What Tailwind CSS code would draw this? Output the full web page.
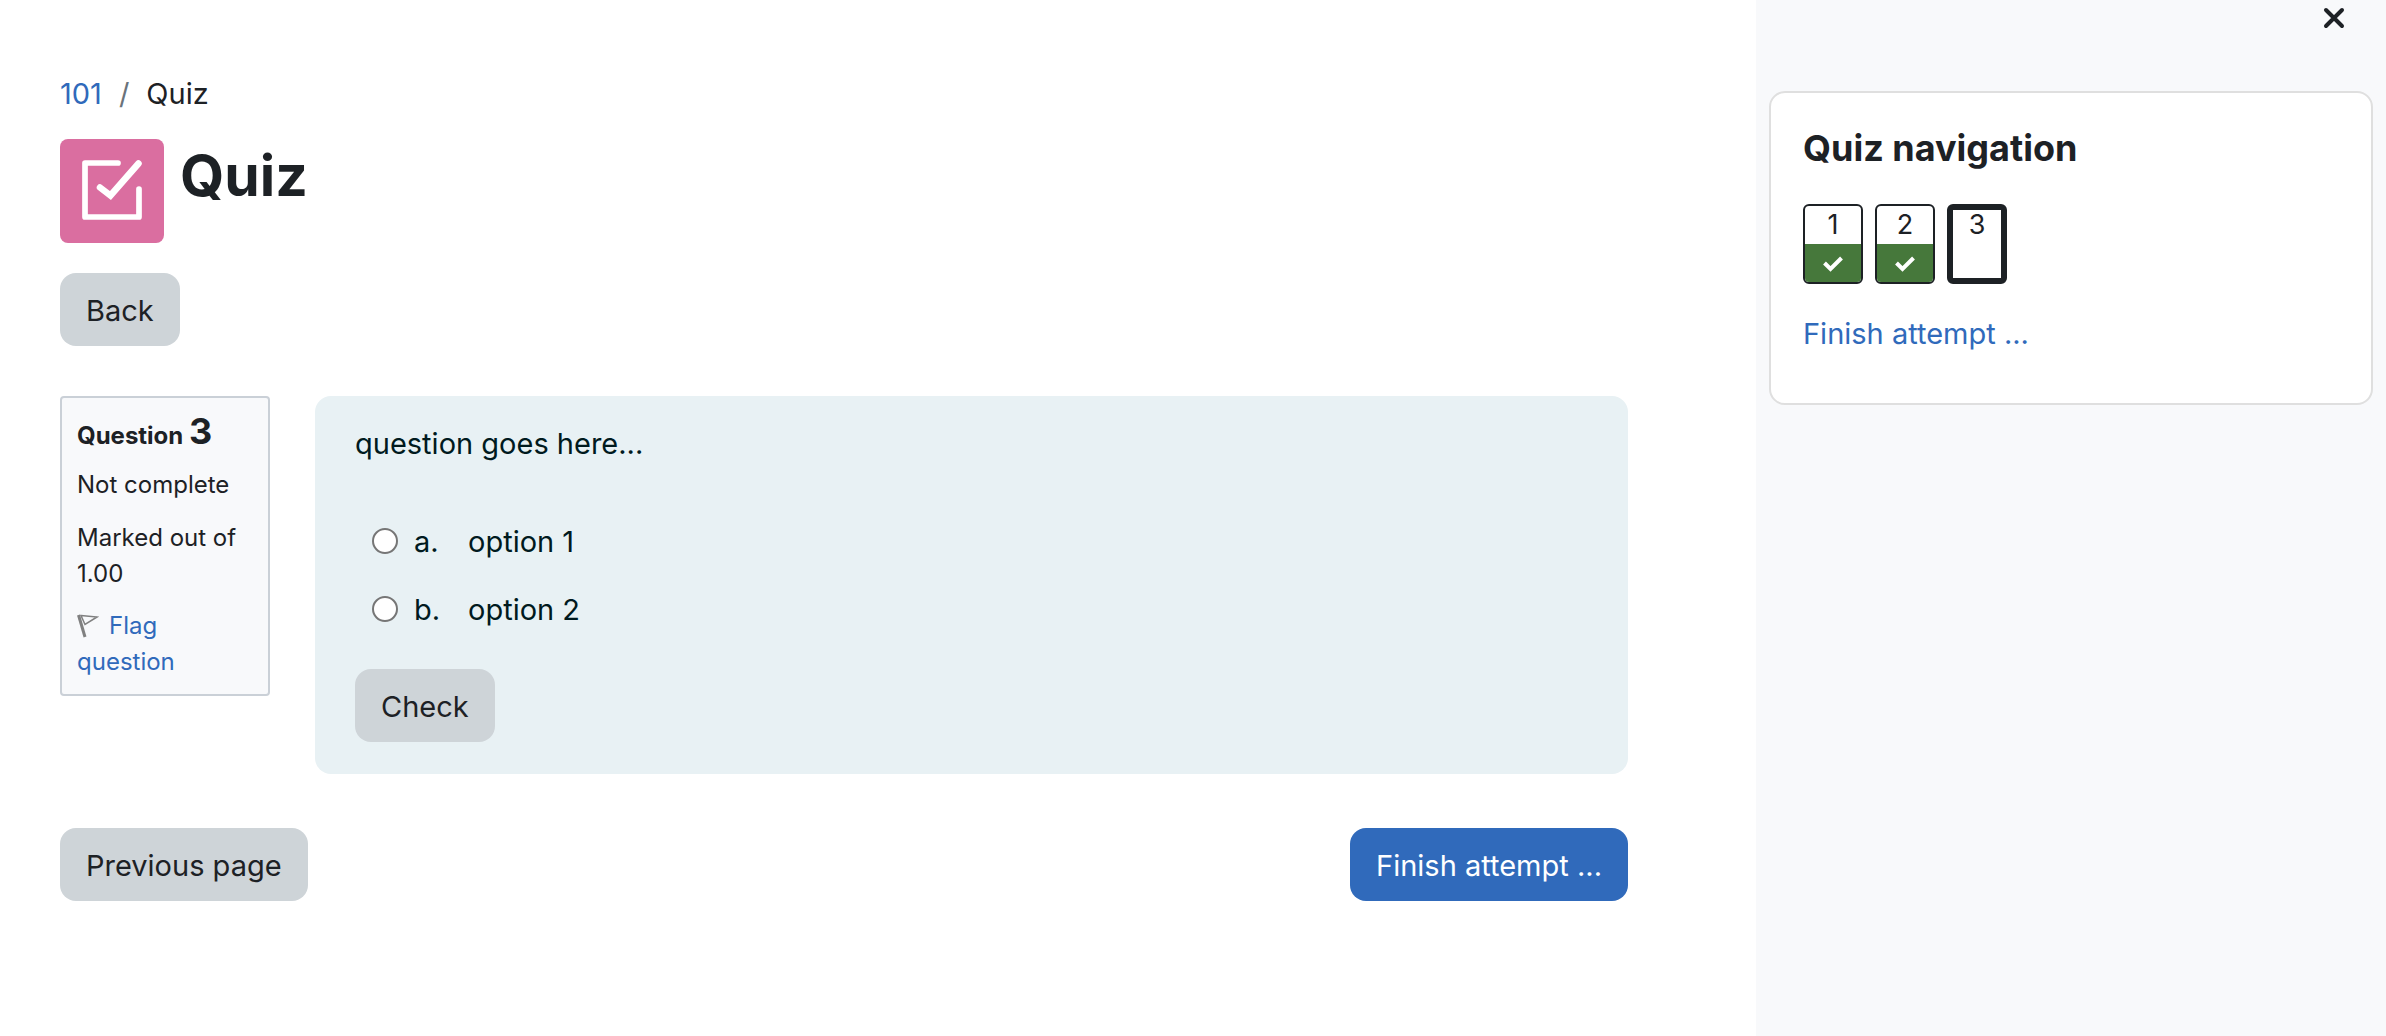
<!DOCTYPE html>
<html lang="en">
<head>
    <meta charset="UTF-8">
    <meta name="viewport" content="width=device-width, initial-scale=1.0">
    <title>Quiz</title>
    <script src="https://cdn.jsdelivr.net/npm/@tailwindcss/browser@4"></script>
</head>
<body class="bg-white text-[#1d2125] font-['Inter',sans-serif] text-[29px] leading-[45px] min-h-screen flex">
    <!-- Main content -->
    <main class="flex-1 min-w-0 pl-[60px] pr-32 pt-[71px] pb-16">
        <nav aria-label="Breadcrumb">
            <ol class="flex gap-[17px]">
                <li><a href="#" class="text-[#306abb] hover:underline">101</a></li>
                <li aria-hidden="true" class="text-[#6a737b]">/</li>
                <li>Quiz</li>
            </ol>
        </nav>

        <header class="flex items-start gap-4 mt-[23px]">
            <div class="size-[104px] shrink-0 rounded-lg bg-[#da6ea0] flex items-center justify-center">
                <svg class="size-[60px] mb-[2px]" viewBox="0 0 60 60" fill="none" stroke="#fff" stroke-linecap="round" aria-hidden="true">
                    <path d="M36 3H3V57H57V29" stroke-width="5.700" stroke-linejoin="round" />
                    <path d="M18 27.500L28.500 35.500L56.500 3.500" stroke-width="6.500" />
                </svg>
            </div>
            <h1 class="text-[57px] leading-[74px] font-bold">Quiz</h1>
        </header>

        <button type="button" class="mt-[30px] h-[73px] px-[26px] pt-[2px] rounded-2xl bg-[#ced4d8] hover:bg-[#bcc4cb] block">Back</button>

        <form class="mt-[50px]" onsubmit="return false">
            <div class="flex items-start gap-[45px]">
                <!-- Question info -->
                <section class="w-[210px] shrink-0 rounded-sm border-2 border-[#cad0d7] bg-[#f8f9fb] px-[15px] pt-3 pb-[14px] text-[24px] leading-[36px]">
                    <h3 class="font-bold whitespace-nowrap leading-[42px]">Question <span class="text-[36px]">3</span></h3>
                    <p class="mt-[10px] whitespace-nowrap">Not complete</p>
                    <p class="mt-[17px]">Marked out of 1.00</p>
                    <a href="#" class="mt-4 block text-[#306abb] hover:underline">
                        <svg class="inline-block w-[22px] h-[24px] mr-[10px] align-[-4px]" viewBox="0 0 22 24" fill="none" stroke="#808080" aria-hidden="true">
                            <path d="M1.500 1L8 23" stroke-width="3" />
                            <path d="M4 1.500L20 3L8 10.500Z" stroke-width="1.500" />
                        </svg>Flag question</a>
                </section>

                <!-- Question body -->
                <section class="flex-1 min-w-0 rounded-2xl bg-[#e8f1f4] text-[#001a1e] px-10 pt-[25px] pb-8">
                    <p>question goes here...</p>
                    <fieldset class="mt-[53px] pl-[17px] space-y-[23px]">
                        <label class="flex items-center">
                            <input type="radio" name="answer" value="a" class="appearance-none size-[26px] shrink-0 mb-[2px] rounded-full border-2 border-[#767676] bg-white checked:border-[8px] checked:border-[#306abb]">
                            <span class="ml-4 w-[54px]">a.</span>
                            <span>option 1</span>
                        </label>
                        <label class="flex items-center">
                            <input type="radio" name="answer" value="b" class="appearance-none size-[26px] shrink-0 mb-[2px] rounded-full border-2 border-[#767676] bg-white checked:border-[8px] checked:border-[#306abb]">
                            <span class="ml-4 w-[54px]">b.</span>
                            <span>option 2</span>
                        </label>
                    </fieldset>
                    <button type="submit" class="mt-[37px] h-[73px] px-[26px] pt-[2px] rounded-2xl bg-[#ced4d8] text-[#1d2125] hover:bg-[#bcc4cb] block">Check</button>
                </section>
            </div>

            <div class="flex justify-between mt-[54px]">
                <button type="button" class="h-[73px] px-[26px] pt-[2px] rounded-2xl bg-[#ced4d8] hover:bg-[#bcc4cb]">Previous page</button>
                <button type="submit" class="h-[73px] px-[26px] pt-[2px] rounded-2xl bg-[#306abb] text-white hover:bg-[#295a9f]">Finish attempt ...</button>
            </div>
        </form>
    </main>

    <!-- Block drawer -->
    <aside class="w-[630px] shrink-0 bg-[#f8f9fb] px-[13px]">
        <div class="flex justify-end pr-[28px] pt-[7px]">
            <button type="button" aria-label="Close block drawer" class="size-[22px]">
                <svg class="size-[22px]" viewBox="0 0 22 22" fill="none" stroke="#1d2125" stroke-width="4" stroke-linecap="round" aria-hidden="true">
                    <path d="M3 3L19 19M19 3L3 19" />
                </svg>
            </button>
        </div>

        <section class="mt-[62px] rounded-2xl border-2 border-[#dfdfdf] bg-white px-8 pt-[33px] pb-[47px]">
            <h2 class="text-[36px] leading-[44px] font-bold">Quiz navigation</h2>
            <div class="flex gap-3 mt-[34px]">
                <a href="#" aria-label="Question 1, answered" class="w-[60px] h-20 rounded-md border-2 border-[#1d2125] overflow-hidden flex flex-col text-center text-[27px] leading-[38px]">
                    <span class="flex-1">1</span>
                    <span class="h-[38px] bg-[#46783b] flex items-center justify-center">
                        <svg class="w-5 h-4 mt-[2px]" viewBox="0 0 20 16" fill="none" stroke="#fff" stroke-width="4" aria-hidden="true">
                            <path d="M1.500 7L7.500 13L18.500 2" />
                        </svg>
                    </span>
                </a>
                <a href="#" aria-label="Question 2, answered" class="w-[60px] h-20 rounded-md border-2 border-[#1d2125] overflow-hidden flex flex-col text-center text-[27px] leading-[38px]">
                    <span class="flex-1">2</span>
                    <span class="h-[38px] bg-[#46783b] flex items-center justify-center">
                        <svg class="w-5 h-4 mt-[2px]" viewBox="0 0 20 16" fill="none" stroke="#fff" stroke-width="4" aria-hidden="true">
                            <path d="M1.500 7L7.500 13L18.500 2" />
                        </svg>
                    </span>
                </a>
                <a href="#" aria-label="Question 3, this page" aria-current="page" class="w-[60px] h-20 rounded-md border-[6px] border-[#1d2125] text-center text-[27px] leading-[30px]">3</a>
            </div>
            <a href="#" class="block w-fit mt-[27px] text-[#306abb] hover:underline">Finish attempt ...</a>
        </section>
    </aside>
</body>
</html>
